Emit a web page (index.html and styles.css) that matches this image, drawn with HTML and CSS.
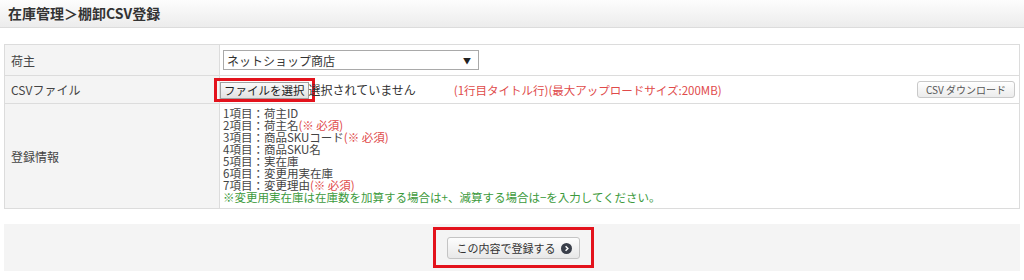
FILE: index.html
```html
<!DOCTYPE html>
<html lang="ja">
<head>
  <meta charset="UTF-8">
  <title>棚卸CSV登録</title>
  <link rel="stylesheet" href="styles.css">
</head>
<body>
  <div class="page-title">在庫管理＞棚卸CSV登録</div>

  <table class="form-table">
    <tr class="row-owner">
      <th>荷主</th>
      <td>
        <div class="select-box">
          <span>ネットショップ商店</span>
          <span class="arrow">▼</span>
        </div>
      </td>
    </tr>
    <tr class="row-file">
      <th>CSVファイル</th>
      <td>
        <div class="file-line">
          <span class="mark mark-file"><span class="file-btn">ファイルを選択</span></span>
          <span class="file-none">選択されていません</span>
          <span class="note-red">(1行目タイトル行)(最大アップロードサイズ:200MB)</span>
          <span class="csv-btn">CSV ダウンロード</span>
        </div>
      </td>
    </tr>
    <tr class="row-info">
      <th>登録情報</th>
      <td>
        <div class="info">
          <div>1項目：荷主ID</div>
          <div>2項目：荷主名<span class="req">(※ 必須)</span></div>
          <div>3項目：商品SKUコード<span class="req">(※ 必須)</span></div>
          <div>4項目：商品SKU名</div>
          <div>5項目：実在庫</div>
          <div>6項目：変更用実在庫</div>
          <div>7項目：変更理由<span class="req">(※ 必須)</span></div>
          <div class="hint">※変更用実在庫は在庫数を加算する場合は+、減算する場合は−を入力してください。</div>
        </div>
      </td>
    </tr>
  </table>

  <div class="submit-area">
    <span class="mark mark-submit">
      <span class="submit-btn">この内容で登録する
        <svg width="11" height="11" viewBox="0 0 12 12"><circle cx="6" cy="6" r="6" fill="#3a3f4a"/><path d="M5 3.5 L7.5 6 L5 8.5" stroke="#fff" stroke-width="1.6" fill="none"/></svg>
      </span>
    </span>
  </div>
</body>
</html>
```

FILE: styles.css
```css
body {
  margin: 0;
  font-family: "Noto Sans CJK JP", "Noto Sans", sans-serif;
  font-size: 12px;
  color: #444;
  background: #fff;
}
.page-title {
  height: 27px;
  line-height: 27px;
  padding-left: 8px;
  font-size: 14px;
  font-weight: bold;
  color: #333;
  background: linear-gradient(#fdfdfd, #ececec);
  border-bottom: 1px solid #dcdcdc;
}
.form-table {
  margin: 16px 4px 0;
  width: 1016px;
  border-collapse: collapse;
}
.form-table th,
.form-table td {
  border: 1px solid #dcdcdc;
  padding: 0;
}
.form-table th {
  width: 208px;
  padding-left: 6px;
  text-align: left;
  font-weight: normal;
  background: #f4f4f4;
  color: #444;
}
.form-table td {
  padding-left: 3px;
}
.row-owner { height: 31px; }
.row-file { height: 28px; }
.row-info { height: 105px; }

.select-box {
  width: 248px;
  height: 18px;
  padding: 0 3px;
  border: 1px solid #a9a9a9;
  display: flex;
  justify-content: space-between;
  align-items: center;
  color: #333;
  font-size: 12px;
}
.select-box .arrow {
  font-size: 8px;
  margin-right: 4px;
  color: #222;
}
.file-line {
  display: flex;
  align-items: center;
}
.mark {
  border: 3px solid #e3121c;
  display: inline-flex;
}
.mark-file {
  margin-left: -9px;
  padding: 1px 3px 0 3px;
  height: 17px;
}
.file-btn {
  border: 1px solid #a0a0a0;
  background: linear-gradient(#fafafa, #e2e2e2);
  color: #222;
  padding: 0 3px;
  font-size: 11.5px;
  line-height: 15px;
}
.file-none {
  margin-left: -6px;
  color: #333;
}
.note-red {
  margin-left: 38px;
  font-size: 11.5px;
  color: #e04a4a;
}
.csv-btn {
  margin-left: auto;
  margin-right: 4px;
  padding: 0 8px;
  height: 15px;
  line-height: 15px;
  font-size: 10px;
  color: #555;
  border: 1px solid #c9c9c9;
  border-radius: 3px;
  background: linear-gradient(#fff, #ececec);
}
.info {
  font-size: 11.5px;
  line-height: 12px;
  color: #444;
  padding: 1px 0 3px;
}
.req { color: #e04a4a; }
.hint { color: #3c9a3c; }

.submit-area {
  margin: 15px 4px 0;
  height: 47px;
  background: #f4f4f4;
  display: flex;
  justify-content: center;
  align-items: center;
}
.mark-submit {
  padding: 7px 11px 6px;
  margin-left: 2px;
}
.submit-btn {
  display: inline-flex;
  align-items: center;
  gap: 5px;
  height: 20px;
  padding: 0 7px 0 9px;
  border: 1px solid #c4c4c4;
  border-radius: 3px;
  background: linear-gradient(#fdfdfd, #e8e8e8);
  color: #333;
  font-size: 11px;
}
```
